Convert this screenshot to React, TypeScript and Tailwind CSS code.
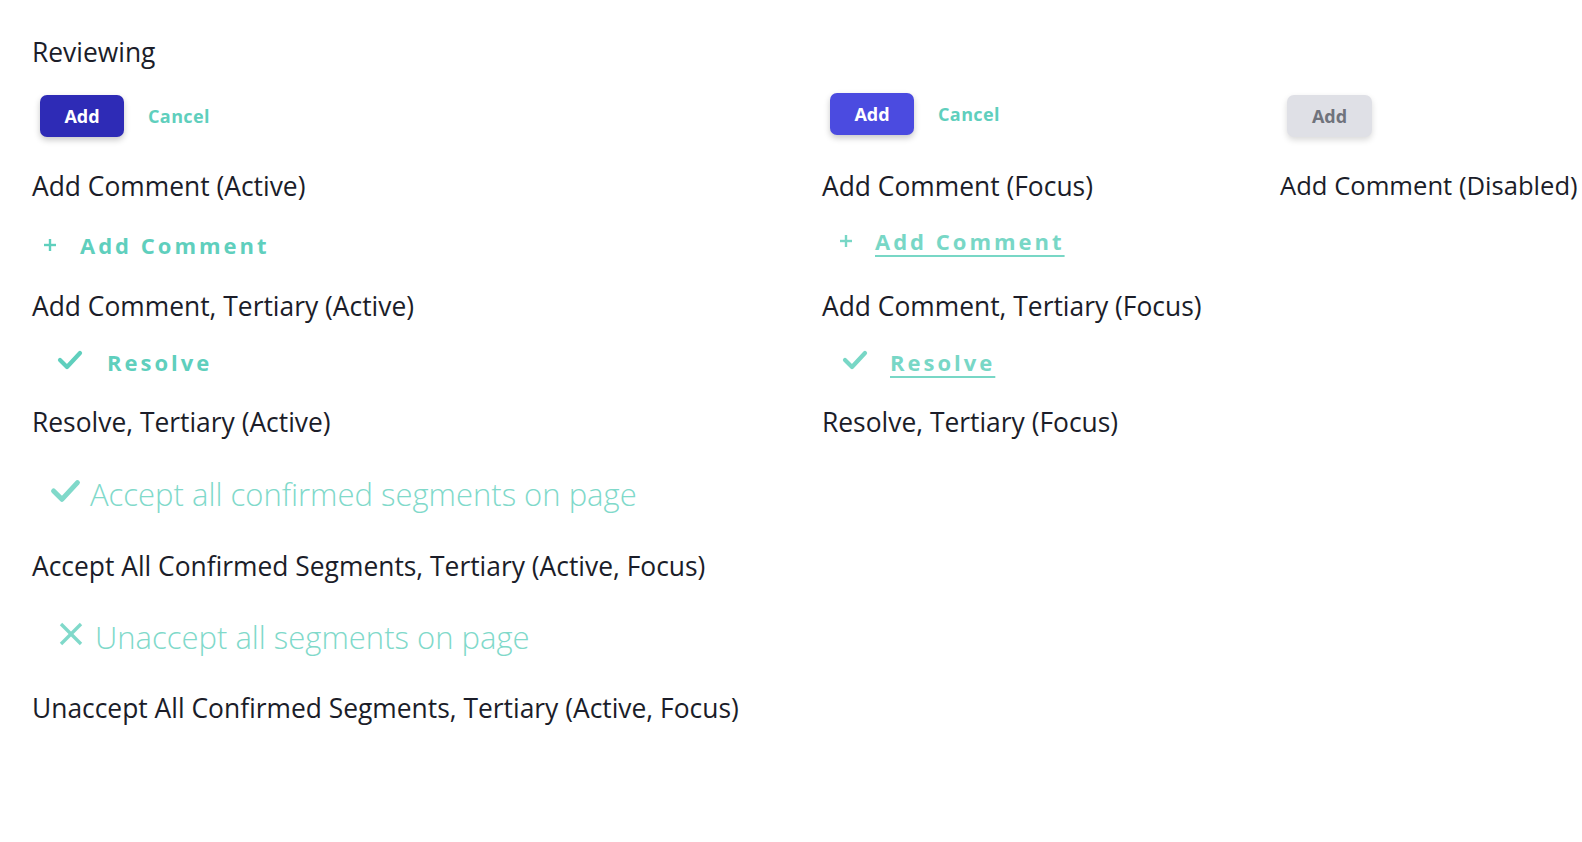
import React from 'react';

const label = 'text-[26.4px] leading-[32px] text-[#1b1d29] whitespace-nowrap';
const rowCols = 'grid grid-cols-[790px_458px_1fr] pl-[32px]';
const tertiary = 'text-[22px] font-bold tracking-[3px]';

function PlusIcon({ className }: { className?: string }) {
  return (
    <svg className={className} width="14" height="14" viewBox="0 0 14 14" fill="none" stroke="currentColor" strokeWidth="2.4">
      <line x1="7" y1="1" x2="7" y2="13" />
      <line x1="1" y1="7" x2="13" y2="7" />
    </svg>
  );
}

function CheckIcon({ className, w = 26, h = 20 }: { className?: string; w?: number; h?: number }) {
  return (
    <svg className={className} width={w} height={h} viewBox="0 0 26 20" fill="none" stroke="currentColor" strokeWidth="4.2" strokeLinecap="round" strokeLinejoin="round">
      <polyline points="3,10 10,17 23,3" />
    </svg>
  );
}

function XIcon({ className }: { className?: string }) {
  return (
    <svg className={className} width="24" height="24" viewBox="0 0 24 24" fill="none" stroke="currentColor" strokeWidth="3.4">
      <line x1="2" y1="2" x2="22" y2="22" />
      <line x1="22" y1="2" x2="2" y2="22" />
    </svg>
  );
}

export default function App() {
  return (
    <div className="h-screen w-full overflow-hidden bg-white pt-[36px] font-['Open_Sans',sans-serif]">
      {/* Reviewing */}
      <div className="h-[32px] pl-[32px]">
        <span className={label}>Reviewing</span>
      </div>

      {/* buttons */}
      <div className={`${rowCols} h-[102px]`}>
        <div className="flex items-start pl-[8px] pt-[27px]">
          <button className="h-[42px] w-[84px] rounded-[7px] bg-[#2e2bb6] text-[18px] font-bold text-white shadow-[0_3px_6px_rgba(0,0,0,0.22)]">
            Add
          </button>
          <button className="ml-[24px] mt-[8px] text-[18px] font-bold tracking-[0.4px] text-[#5fcfbd]">Cancel</button>
        </div>
        <div className="flex items-start pl-[8px] pt-[25px]">
          <button className="h-[42px] w-[84px] rounded-[7px] bg-[#4b4be0] text-[18px] font-bold text-white shadow-[0_3px_6px_rgba(0,0,0,0.22)]">
            Add
          </button>
          <button className="ml-[24px] mt-[8px] text-[18px] font-bold tracking-[0.4px] text-[#5fcfbd]">Cancel</button>
        </div>
        <div className="flex items-start pl-[7px] pt-[27px]">
          <button disabled className="h-[42px] w-[85px] rounded-[7px] bg-[#dfe0e6] text-[18px] font-bold text-[#70737c] shadow-[0_3px_6px_rgba(0,0,0,0.15)]">
            Add
          </button>
        </div>
      </div>

      <div className={`${rowCols} h-[32px]`}>
        <span className={label}>Add Comment (Active)</span>
        <span className={label}>Add Comment (Focus)</span>
        <span className="whitespace-nowrap text-[25.6px] leading-[32px] text-[#1b1d29]">Add Comment (Disabled)</span>
      </div>

      {/* add comment */}
      <div className={`${rowCols} h-[88px]`}>
        <div className="flex items-center pb-[2px] pl-[11px] text-[#5fcfbd]">
          <PlusIcon />
          <span className={`ml-[23px] ${tertiary}`}>Add Comment</span>
        </div>
        <div className="flex items-center pb-[10px] pl-[17px] text-[#78d7c6]">
          <PlusIcon />
          <span className={`ml-[22px] ${tertiary} underline decoration-2 underline-offset-[5px]`}>Add Comment</span>
        </div>
        <div />
      </div>

      <div className={`${rowCols} h-[32px]`}>
        <span className={label}>Add Comment, Tertiary (Active)</span>
        <span className={label}>Add Comment, Tertiary (Focus)</span>
        <div />
      </div>

      {/* resolve */}
      <div className={`${rowCols} h-[84px]`}>
        <div className="flex items-center pb-[4px] pl-[25px] text-[#5fcfbd]">
          <CheckIcon className="-mt-[4px]" />
          <span className={`ml-[24px] ${tertiary}`}>Resolve</span>
        </div>
        <div className="flex items-center pb-[4px] pl-[20px] text-[#78d7c6]">
          <CheckIcon className="-mt-[4px]" />
          <span className={`ml-[22px] ${tertiary} underline decoration-2 underline-offset-[5px]`}>Resolve</span>
        </div>
        <div />
      </div>

      <div className={`${rowCols} h-[32px]`}>
        <span className={label}>Resolve, Tertiary (Active)</span>
        <span className={label}>Resolve, Tertiary (Focus)</span>
        <div />
      </div>

      {/* accept all */}
      <div className="flex h-[112px] items-center pl-[50px] text-[#80d9ca]">
        <CheckIcon className="-mt-[6px]" w={31} h={24} />
        <span className="ml-[9px] text-[31px] font-light">Accept all confirmed segments on page</span>
      </div>

      <div className="h-[32px] pl-[32px]">
        <span className={label}>Accept All Confirmed Segments, Tertiary (Active, Focus)</span>
      </div>

      {/* unaccept */}
      <div className="flex h-[110px] items-center pl-[59px] text-[#80d9ca]">
        <XIcon className="-mt-[6px]" />
        <span className="ml-[12px] text-[31px] font-light">Unaccept all segments on page</span>
      </div>

      <div className="h-[32px] pl-[32px]">
        <span className={label}>Unaccept All Confirmed Segments, Tertiary (Active, Focus)</span>
      </div>
    </div>
  );
}
